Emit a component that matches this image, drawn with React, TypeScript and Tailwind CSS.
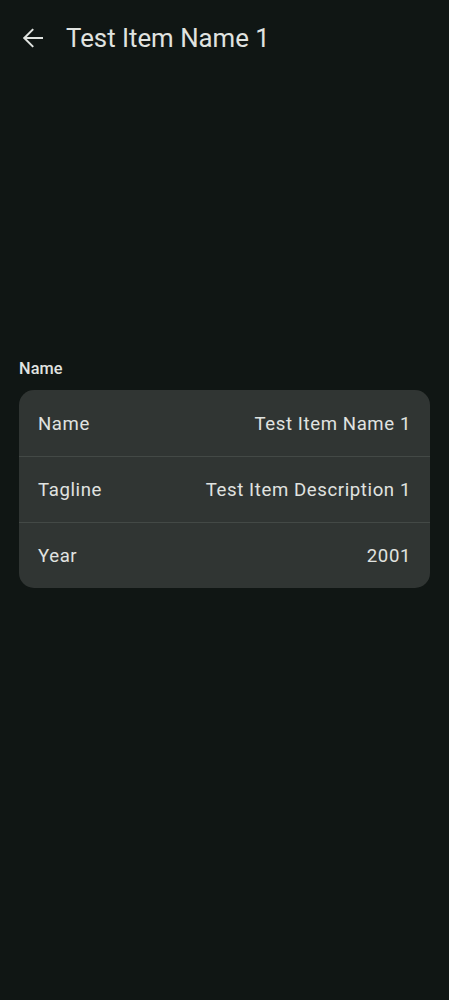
import React from "react";

const rows = [
  { label: "Name", value: "Test Item Name 1" },
  { label: "Tagline", value: "Test Item Description 1" },
  { label: "Year", value: "2001" },
];

export default function App() {
  return (
    <div
      className="min-h-[1000px] w-full bg-[#101614] text-[#e0e3e0]"
      style={{ fontFamily: "Roboto, 'Noto Sans', sans-serif" }}
    >
      <div className="flex h-[75px] items-center">
        <div className="flex w-[66px] items-center pl-[22px]">
          <svg width="22" height="20" viewBox="0 0 22 20" fill="none">
            <path
              d="M20 10H2.5M10.5 1.8L2.3 10l8.2 8.2"
              stroke="#e0e3e0"
              strokeWidth="2"
              strokeLinecap="square"
            />
          </svg>
        </div>
        <div className="text-[25.8px] leading-8">Test Item Name 1</div>
      </div>
      <div className="px-[19px] pt-[282px]">
        <div className="text-[16.3px] font-medium leading-6 tracking-[0.1px]">Name</div>
        <div className="mt-[9px] overflow-hidden rounded-[15px] bg-[#303533]">
          {rows.map((r, i) => (
            <div
              key={r.label}
              className={
                "flex h-[66px] items-center justify-between px-[19px] pt-[3px] text-[18.6px] tracking-[0.6px] " +
                (i > 0 ? "border-t border-[#434946]" : "")
              }
            >
              <span>{r.label}</span>
              <span>{r.value}</span>
            </div>
          ))}
        </div>
      </div>
    </div>
  );
}
